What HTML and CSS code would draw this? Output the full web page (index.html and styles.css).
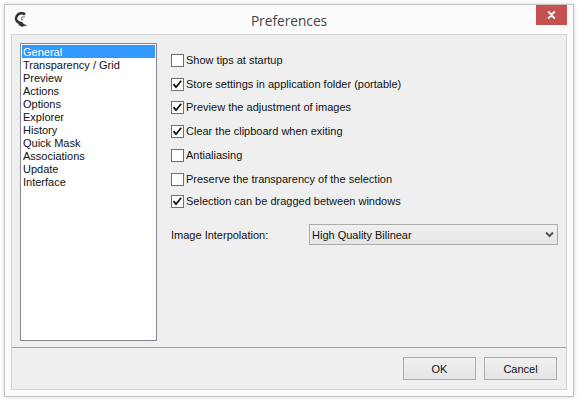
FILE: index.html
```html
<!DOCTYPE html>
<html lang="en">
<head>
<meta charset="utf-8">
<title>Preferences</title>
<link rel="stylesheet" href="styles.css">
</head>
<body>
<div class="window">
  <header class="titlebar">
    <svg class="app-icon" width="15" height="15" viewBox="0 0 15 15" aria-hidden="true">
      <path d="M11 2.600C9 1 6 1 4 2.600 1.800 4.500 1.500 7.500 3.200 9.500c1.400 1.500 3.500 1.600 5.300 2" fill="none" stroke="#2f3336" stroke-width="2.600"/>
      <path d="M5 11.500l2.500-1 6 3.500-3-.3-2.500 1.300-2-1.500-1.500.3z" fill="#2f3336"/>
      <path d="M11 5.200C9.800 4.500 8 4.800 7.500 6c-.4 1 .2 1.900 1.200 2.200" fill="none" stroke="#85898c" stroke-width="1.200"/>
    </svg>
    <h1 class="title">Preferences</h1>
    <button class="close" type="button" aria-label="Close">
      <svg width="9" height="8" viewBox="0 0 9 8" aria-hidden="true"><path d="M1 .5l3.500 3 3.500-3M1 7.500l3.500-3 3.500 3" fill="none" stroke="#fff" stroke-width="1.800"/></svg>
    </button>
  </header>
  <div class="panel">
    <main class="content">
      <ul class="nav">
        <li class="selected">General</li>
        <li>Transparency / Grid</li>
        <li>Preview</li>
        <li>Actions</li>
        <li>Options</li>
        <li>Explorer</li>
        <li>History</li>
        <li>Quick Mask</li>
        <li>Associations</li>
        <li>Update</li>
        <li>Interface</li>
      </ul>
      <section class="options">
        <div class="option"><span class="box"></span>Show tips at startup</div>
        <div class="option"><span class="box"><svg width="11" height="11" viewBox="0 0 11 11"><path d="M1.500 5.200l2.500 3L9.200 1.800" fill="none" stroke="#111" stroke-width="1.800"/></svg></span>Store settings in application folder (portable)</div>
        <div class="option near"><span class="box"><svg width="11" height="11" viewBox="0 0 11 11"><path d="M1.500 5.200l2.500 3L9.200 1.800" fill="none" stroke="#111" stroke-width="1.800"/></svg></span>Preview the adjustment of images</div>
        <div class="option"><span class="box"><svg width="11" height="11" viewBox="0 0 11 11"><path d="M1.500 5.200l2.500 3L9.200 1.800" fill="none" stroke="#111" stroke-width="1.800"/></svg></span>Clear the clipboard when exiting</div>
        <div class="option"><span class="box"></span>Antialiasing</div>
        <div class="option"><span class="box"></span>Preserve the transparency of the selection</div>
        <div class="option nearest"><span class="box"><svg width="11" height="11" viewBox="0 0 11 11"><path d="M1.500 5.200l2.500 3L9.200 1.800" fill="none" stroke="#111" stroke-width="1.800"/></svg></span>Selection can be dragged between windows</div>
        <div class="field">
          <label class="field-label" for="interp">Image Interpolation:</label>
          <div class="select-wrap">
            <select class="select" id="interp"><option>High Quality Bilinear</option></select>
            <svg class="chevron" width="9" height="7" viewBox="0 0 9 7" aria-hidden="true"><path d="M1 1.500l3.500 3.500L8 1.500" fill="none" stroke="#555" stroke-width="2"/></svg>
          </div>
        </div>
      </section>
    </main>
    <footer class="footer">
      <button class="btn" type="button">OK</button>
      <button class="btn" type="button">Cancel</button>
    </footer>
  </div>
</div>
</body>
</html>
```
FILE: styles.css
```css
* { box-sizing: border-box; }
html, body { margin: 0; height: 100%; }
body {
  background: #fff;
  padding: 4px 5px 4px 4px;
  font-family: "Liberation Sans", Arial, sans-serif;
  font-size: 11px;
  color: #111;
}
.window {
  position: relative;
  height: 393px;
  border: 1px solid #c2c2c2;
  background: #fcfcfc;
  box-shadow: 0 0 4px rgba(0,0,0,.18);
  padding: 0 6px 6px 6px;
  display: flex;
  flex-direction: column;
}
.titlebar {
  height: 29px;
  flex: none;
  display: flex;
  align-items: center;
  justify-content: center;
}
.app-icon { position: absolute; left: 9px; top: 7px; }
.title {
  margin: 0;
  font-family: "Open Sans", "Noto Sans", sans-serif;
  font-size: 13.7px;
  font-weight: 400;
  color: #444;
  padding-top: 1px;
}
.close {
  position: absolute;
  right: 6px;
  top: 0;
  width: 31px;
  height: 20px;
  border: 0;
  padding: 0;
  background: #c75050;
  display: flex;
  align-items: center;
  justify-content: center;
}
.panel {
  flex: 1;
  border: 1px solid #d3d3d3;
  background: #efefef;
  display: flex;
  flex-direction: column;
}
.content {
  flex: 1;
  display: flex;
  padding: 8px 8px 6px;
  border-bottom: 1px solid #a0a0a0;
}
.nav {
  list-style: none;
  margin: 0;
  padding: 1px;
  width: 137px;
  flex: none;
  border: 1px solid #828790;
  background: #fff;
}
.nav li {
  height: 13px;
  line-height: 15px;
  padding-left: 1px;
  white-space: nowrap;
}
.nav .selected { background: #3399ff; color: #fff; }
.options {
  flex: 1;
  margin-left: 14px;
  padding-top: 6px;
  display: flex;
  flex-direction: column;
}
.option {
  height: 22px;
  margin-top: 2px;
  display: flex;
  align-items: center;
  white-space: nowrap;
}
.option:first-child { margin-top: 0; }
.option.near { margin-top: 1px; }
.option.nearest { margin-top: 0; }
.box {
  width: 13px;
  height: 13px;
  flex: none;
  margin-right: 2px;
  border: 1px solid #707070;
  background: #fff;
  display: flex;
}
.field {
  display: flex;
  align-items: center;
  margin-top: 12px;
}
.field-label { width: 138px; flex: none; }
.select-wrap { position: relative; flex: 1; display: flex; }
.select {
  appearance: none;
  width: 100%;
  height: 21px;
  border: 1px solid #acacac;
  border-radius: 0;
  background: linear-gradient(#f0f0f0, #e5e5e5);
  padding: 0 0 0 2px;
  font: inherit;
  color: #111;
}
.chevron { position: absolute; right: 4px; top: 7px; }
.footer {
  height: 41px;
  flex: none;
  display: flex;
  justify-content: flex-end;
  gap: 8px;
  padding: 9px 9px 0 0;
}
.btn {
  width: 73px;
  height: 23px;
  border: 1px solid #acacac;
  background: linear-gradient(#f0f0f0, #e5e5e5);
  font: inherit;
  color: #111;
  padding: 0;
}
```
